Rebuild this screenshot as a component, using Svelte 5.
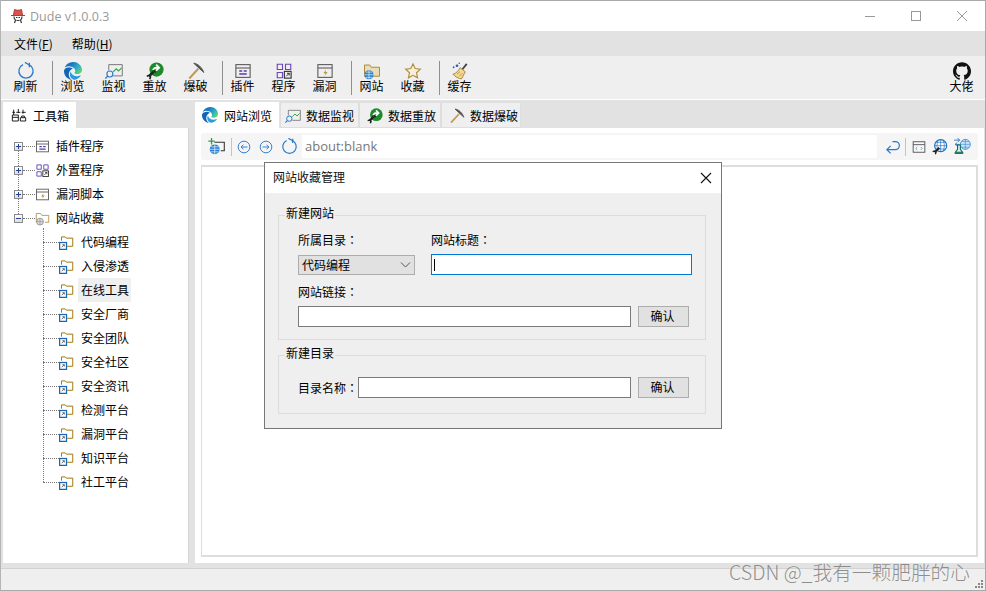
<script>
	const tools1 = [
		{ icon: 'edge', label: '浏览' },
		{ icon: 'monitor', label: '监视' },
		{ icon: 'replay', label: '重放' },
		{ icon: 'pick', label: '爆破' }
	];
	const tools2 = [
		{ icon: 'plugin', label: '插件' },
		{ icon: 'program', label: '程序' },
		{ icon: 'vuln', label: '漏洞' }
	];
	const tools3 = [
		{ icon: 'site', label: '网站' },
		{ icon: 'star', label: '收藏' }
	];
	const roots = [
		{ icon: 'plugin', label: '插件程序' },
		{ icon: 'program', label: '外置程序' },
		{ icon: 'vuln', label: '漏洞脚本' }
	];
	const sites = ['代码编程', '入侵渗透', '在线工具', '安全厂商', '安全团队', '安全社区', '安全资讯', '检测平台', '漏洞平台', '知识平台', '社工平台'];
	const tabs = [
		{ icon: 'monitor', label: '数据监视', w: 79, pad: 4 },
		{ icon: 'replay', label: '数据重放', w: 82, pad: 7 },
		{ icon: 'pick', label: '数据爆破', w: 80, pad: 7 }
	];
</script>

{#snippet icon(name, size = 18)}
	<svg class="icon" width={size} height={size} viewBox="0 0 24 24" fill="none">
		{#if name === 'refresh'}
			<path d="M8 3.500A9.500 9.500 0 1 0 16 3.500" stroke="#2b79c9" stroke-width="1.700" />
			<path d="M16.500 1v6" stroke="#2b79c9" stroke-width="1.700" /><path d="M10.500 .5l5.500 3-1 .5" stroke="#2b79c9" stroke-width="1.700" />
		{:else if name === 'edge'}
			<defs>
				<linearGradient id="edgeTop" x1="0" y1="0" x2="1" y2="0.6">
					<stop offset="0.35" stop-color="#1a73c4" /><stop offset="0.8" stop-color="#35b6c0" /><stop offset="1" stop-color="#5fd06a" />
				</linearGradient>
			</defs>
			<path fill="#2a9bdc" d="M21.86 17.86q.14 0 .25.12.1.13.1.25t-.11.33l-.32.46-.43.53-.44.5q-.21.25-.38.42l-.22.23q-.58.53-1.34 1.04-.76.51-1.6.91-.86.4-1.74.64t-1.67.24q-.9 0-1.69-.28-.8-.28-1.48-.78-.68-.5-1.22-1.17-.53-.66-.92-1.44-.38-.77-.58-1.6-.2-.83-.2-1.67 0-1 .32-1.96.33-.97.87-1.8.14.95.55 1.77.41.82 1.02 1.5.6.68 1.38 1.21.78.54 1.64.9.86.36 1.77.56.92.2 1.8.2 1.12 0 2.18-.24 1.06-.23 2.06-.72l.2-.1.2-.05z" />
			<path fill="#1265b5" d="M6.36 16.59q0 1.1.27 2.15.27 1.06.78 2.03.51.96 1.24 1.77.74.82 1.66 1.4-1.47-.2-2.8-.74-1.33-.55-2.48-1.37-1.15-.83-2.08-1.9-.92-1.07-1.58-2.33T.36 14.94Q0 13.54 0 12.06q0-.81.32-1.49.31-.68.83-1.23.53-.55 1.2-.96.66-.4 1.35-.66.74-.27 1.5-.39.78-.12 1.55-.12.7 0 1.42.1.72.12 1.4.35.68.23 1.32.57.63.35 1.16.83-.35 0-.7.07-.33.07-.65.23v-.02q-.63.28-1.2.74-.57.46-1.05 1.04-.48.58-.87 1.26-.38.67-.65 1.39-.27.71-.42 1.44-.15.72-.15 1.38z" />
			<path fill="url(#edgeTop)" d="M11.96.06q1.7 0 3.33.39 1.63.38 3.07 1.15 1.43.77 2.62 1.93 1.18 1.16 1.98 2.7.49.94.76 1.96.28 1 .28 2.08 0 .89-.23 1.7-.24.8-.69 1.48-.45.68-1.1 1.22-.64.53-1.45.88-.54.24-1.11.36-.58.13-1.16.13-.42 0-.97-.03-.54-.03-1.1-.12-.55-.1-1.05-.28-.5-.19-.84-.5-.12-.09-.23-.24-.1-.16-.1-.33 0-.15.16-.35.16-.2.35-.5.2-.28.36-.68.16-.4.16-.95 0-1.06-.4-1.96-.4-.91-1.06-1.64-.66-.74-1.52-1.28-.86-.55-1.79-.89-.84-.3-1.72-.44-.87-.14-1.76-.14-1.55 0-3.06.45T.94 7.55q.71-1.74 1.81-3.13 1.1-1.38 2.52-2.35Q6.68 1.1 8.37.58q1.7-.52 3.58-.52Z" />
		{:else if name === 'monitor'}
			<path d="M5 11V3.500h18v15H11" stroke="#6d6d6d" stroke-width="1.200" />
			<path d="M11 13l4-4 3 3 4-4" stroke="#3fa648" stroke-width="1.500" />
			<circle cx="6.500" cy="16" r="4" stroke="#2b79c9" stroke-width="1.500" /><path d="M3.500 19l-3 3" stroke="#2b79c9" stroke-width="1.700" />
		{:else if name === 'replay'}
			<circle cx="14" cy="10" r="9.500" fill="#1f8a2d" />
			<path d="M9 10.500c2-3 5-3.500 8-3M13.500 3.500l4 4-4 4" stroke="#fff" stroke-width="2.400" />
			<path d="M10 13l-6 6" stroke="#222" stroke-width="3.400" /><path d="M1 19l3-1 2 2-1 3M10 11l3 3" stroke="#222" stroke-width="2.200" />
		{:else if name === 'pick'}
			<path d="M3 22L15 9" stroke="#c09a50" stroke-width="2.600" />
			<path d="M9 1.500C14 2 20 7 22.500 14L14 6.500Z" fill="#555" stroke="#444" stroke-width="1" />
		{:else if name === 'plugin'}
			<rect x="2.500" y="3.500" width="19" height="17" stroke="#555" stroke-width="1.400" />
			<path d="M2.500 8h19" stroke="#555" stroke-width="1.400" />
			<path d="M7 12h4M13 12h4M7 16h10" stroke="#5a3da8" stroke-width="2" />
		{:else if name === 'program'}
			<path d="M3 3h7v7H3zM14 3h7v7h-7zM3 14h7v7H3z" stroke="#6b46b8" stroke-width="1.500" />
			<rect x="12.500" y="12.500" width="9" height="9" stroke="#333" stroke-width="1.500" />
			<path d="M15 19l4-4M16 15h3v3" stroke="#333" stroke-width="1.300" />
		{:else if name === 'vuln'}
			<rect x="2.500" y="3.500" width="19" height="17" stroke="#555" stroke-width="1.400" />
			<path d="M2.500 8h19" stroke="#555" stroke-width="1.400" />
			<path d="M13.500 10l-3.500 5h3l-2 4 4.500-5.500h-3z" fill="#b8860b" />
		{:else if name === 'site'}
			<path d="M2 19V4h7l2 3h11v12Z" fill="#eadcb4" stroke="#a98a3a" stroke-width="1.300" />
			<circle cx="8" cy="17" r="6" fill="#2a7fd0" />
			<path d="M2 17h12M8 11v12M4 13.500h8M4 20.500h8" stroke="#fff" stroke-width="0.800" />
		{:else if name === 'star'}
			<path d="M12 2.500l2.900 6.300 6.900.8-5.100 4.700 1.400 6.800-6.100-3.400-6.100 3.400 1.400-6.800-5.100-4.700 6.900-.8Z" fill="#f6eed6" stroke="#b08d3c" stroke-width="1.500" />
		{:else if name === 'broom'}
			<path d="M15 10L21 2.500" stroke="#444" stroke-width="2.400" />
			<path d="M12 7.500l7 5.500-5 9.500c-3 0-9-3-11.500-6.500C6 16 10 12 12 7.500Z" fill="#f1d98f" stroke="#a9873a" stroke-width="1.300" />
			<path d="M8 16l4-3M11 19l4-4" stroke="#a9873a" stroke-width="1" />
			<circle cx="8" cy="5" r="1.800" fill="#2b59c3" /><circle cx="3.500" cy="7" r="1.200" fill="#2b59c3" /><circle cx="11" cy="1.800" r="1" fill="#2b59c3" />
		{:else if name === 'github'}
			<path fill="#111" d="M12 .297c-6.630 0-12 5.373-12 12 0 5.303 3.438 9.800 8.205 11.385.6.113.82-.258.82-.577 0-.285-.01-1.040-.015-2.040-3.338.724-4.042-1.610-4.042-1.610C4.422 18.070 3.633 17.700 3.633 17.700c-1.087-.744.084-.729.084-.729 1.205.084 1.838 1.236 1.838 1.236 1.070 1.835 2.809 1.305 3.495.998.108-.776.417-1.305.760-1.605-2.665-.3-5.466-1.332-5.466-5.930 0-1.310.465-2.380 1.235-3.220-.135-.303-.54-1.523.105-3.176 0 0 1.005-.322 3.300 1.230.96-.267 1.980-.399 3-.405 1.020.006 2.040.138 3 .405 2.280-1.552 3.285-1.230 3.285-1.230.645 1.653.24 2.873.12 3.176.765.84 1.230 1.910 1.230 3.220 0 4.610-2.805 5.625-5.475 5.920.42.36.81 1.096.81 2.220 0 1.606-.015 2.896-.015 3.286 0 .315.21.69.825.57C20.565 22.092 24 17.592 24 12.297c0-6.627-5.373-12-12-12" />
		{:else if name === 'toolbox'}
			<path d="M2 12h9v9H2zM2 15.500h9M14 16h8v5h-8zM16 16v-2.500h4V16M2 8h4M8 8h6M16 8h6M4 4v8M11 3v6M18 4v6" stroke="#111" stroke-width="1.400" />
		{:else if name === 'siteGray'}
			<path d="M2 18V4h7l2 3h11v11h-6" fill="#fff" stroke="#a98a3a" stroke-width="1.300" />
			<circle cx="8" cy="17" r="5.500" fill="#ddd" stroke="#777" />
			<path d="M2.500 17h11M8 11.500v11" stroke="#777" stroke-width="0.800" />
		{:else if name === 'fav'}
			<path d="M4 9V3h6l1.500 2H22v13h-9" stroke="#a07a10" stroke-width="1.600" />
			<rect x="1" y="12" width="11" height="11" fill="#fff" stroke="#1769b8" stroke-width="2" />
			<path d="M4.500 19.500l4-4M5.500 15.500h3v3" stroke="#444" stroke-width="1.200" />
		{:else if name === 'back'}
			<circle cx="12" cy="12" r="10" stroke="#2b79c9" stroke-width="1.600" /><path d="M18 12H7M11 8l-4 4 4 4" stroke="#2b79c9" stroke-width="1.600" />
		{:else if name === 'forward'}
			<circle cx="12" cy="12" r="10" stroke="#2b79c9" stroke-width="1.600" /><path d="M6 12h11M13 8l4 4-4 4" stroke="#2b79c9" stroke-width="1.600" />
		{:else if name === 'newsite'}
			<path d="M9 6h14v12h-5" stroke="#333" stroke-width="1.500" />
			<circle cx="9.500" cy="16" r="7" fill="#2a7fd0" />
			<path d="M2.500 16h14M9.500 9v14M4 12.500h11M4 19.500h11" stroke="#fff" stroke-width="0.900" />
			<path d="M5 0v9M0.500 4.500h9" stroke="#2f9e44" stroke-width="1.800" />
		{:else if name === 'enter'}
			<path d="M12 4h4.500a6.500 6.500 0 0 1 0 13H3M9 11l-6 6 6 6" stroke="#2b79c9" stroke-width="2" />
		{:else if name === 'code'}
			<rect x="2" y="3" width="20" height="18" fill="#f8f8f8" stroke="#555" stroke-width="1.600" />
			<path d="M2 8h20" stroke="#555" stroke-width="1.600" />
			<path d="M9 12l-2.500 2.500L9 17M15 12l2.500 2.500L15 17" stroke="#2e9fc0" stroke-width="1.500" />
		{:else if name === 'globeTool'}
			<circle cx="13" cy="10" r="9" fill="#fff" stroke="#1f6fc0" stroke-width="1.800" />
			<path d="M4 10h18M13 1v18M6 5h14M6 15h14M9 2.500c-2 5-2 10 0 15M17 2.500c2 5 2 10 0 15" stroke="#1f6fc0" stroke-width="1" />
			<path d="M11 13l-7 7" stroke="#222" stroke-width="3.200" /><path d="M1 19l3-1 2 2-1 3" stroke="#222" stroke-width="2" />
		{:else if name === 'lab'}
			<circle cx="16" cy="9" r="7" fill="#cfe4f7" stroke="#3b8ed6" stroke-width="1.300" />
			<path d="M9 9h14M16 2v14M11 5h10M11 13h10" stroke="#3b8ed6" stroke-width="0.900" />
			<path d="M0 3h8M5 0l3 3-3 3M8 9H2M4 7L1.500 9 4 11" stroke="#1f6fc0" stroke-width="1.200" />
			<path d="M5 10h4v6l3 4H2l3-4Z" fill="#d9f0e8" stroke="#0f6b5b" stroke-width="1.500" /><path d="M1 21.500h12" stroke="#0f6b5b" stroke-width="2" />
		{/if}
	</svg>
{/snippet}

{#snippet toolButton(item)}
	<button class="tool">
		{@render icon(item.icon, 18)}
		<span>{item.label}</span>
	</button>
{/snippet}

<div class="window">
	<header class="titlebar">
		<svg class="logo" width="16" height="16" viewBox="0 0 16 16" fill="none">
			<path d="M1 7.500h14M3.500 7l1-5.500c2 1 5 1 7 0l1 5.500" fill="#d9534f" stroke="#b53a36" />
			<path d="M4 8.500c0 2 .5 3 1.500 3.500l-1 3M12 8.500c0 2-.5 3-1.500 3.500l1 3M6 9.500h1.500M8.500 9.500H10M6.500 12.500h3" stroke="#333" stroke-width="1.200" />
		</svg>
		<span class="apptitle">Dude v1.0.0.3</span>
		<div class="winctl">
			<svg width="46" height="20" viewBox="0 0 46 20"><path d="M18 10.500h10" stroke="#999" /></svg>
			<svg width="46" height="20" viewBox="0 0 46 20"><rect x="18.500" y="5.500" width="9" height="9" fill="none" stroke="#999" /></svg>
			<svg width="46" height="20" viewBox="0 0 46 20"><path d="M18 5l10 10M28 5L18 15" stroke="#999" /></svg>
		</div>
	</header>

	<nav class="menubar">
		<span>文件(<u>F</u>)</span>
		<span>帮助(<u>H</u>)</span>
	</nav>

	<div class="toolbar">
		{@render toolButton({ icon: 'refresh', label: '刷新' })}
		<i class="sep"></i>
		{#each tools1 as item}{@render toolButton(item)}{/each}
		<i class="sep"></i>
		{#each tools2 as item}{@render toolButton(item)}{/each}
		<i class="sep"></i>
		{#each tools3 as item}{@render toolButton(item)}{/each}
		<i class="sep"></i>
		{@render toolButton({ icon: 'broom', label: '缓存' })}
		<div class="spacer"></div>
		{@render toolButton({ icon: 'github', label: '大佬' })}
	</div>

	<main class="workspace">
		<aside class="side">
			<div class="tabstrip">
				<div class="tab active toolbox">{@render icon('toolbox', 16)}<span>工具箱</span></div>
			</div>
			<div class="tree">
				{#each roots as root}
					<div class="row">
						<span class="exp plus"></span><span class="dots"></span>
						{@render icon(root.icon, 15)}
						<span class="rootlabel">{root.label}</span>
					</div>
				{/each}
				<div class="row">
					<span class="exp minus"></span><span class="dots"></span>
					{@render icon('siteGray', 15)}
					<span class="rootlabel">网站收藏</span>
				</div>
				<div class="children">
					{#each sites as site}
						<div class="row child">
							<span class="dots"></span>
							{@render icon('fav', 15)}
							<span class="childlabel" class:selected={site === '在线工具'}>{site}</span>
						</div>
					{/each}
				</div>
			</div>
		</aside>

		<section class="content">
			<div class="tabstrip">
				<div class="tab active first">{@render icon('edge', 16)}<span>网站浏览</span></div>
				{#each tabs as tab}
					<div class="tab" style="width: {tab.w}px; padding-left: {tab.pad}px">{@render icon(tab.icon, 16)}<span>{tab.label}</span></div>
				{/each}
			</div>
			<div class="pane">
				<div class="browserbar">
					{@render icon('newsite', 17)}
					<i class="barsep"></i>
					<span class="nav">{@render icon('back', 14)}</span>
					<span class="nav">{@render icon('forward', 14)}</span>
					<span class="nav">{@render icon('refresh', 17)}</span>
					<div class="address">about:blank</div>
					<span class="enter">{@render icon('enter', 15)}</span>
					<i class="barsep end"></i>
					<div class="bartools">
						{@render icon('code', 14)}
						{@render icon('globeTool', 16)}
						{@render icon('lab', 17)}
					</div>
				</div>
				<div class="page"></div>
			</div>
		</section>
	</main>

	<footer class="statusbar">
		<svg class="grip" width="10" height="10" viewBox="0 0 10 10" fill="#888">
			<rect x="7" y="1" width="2" height="2" /><rect x="4" y="4" width="2" height="2" /><rect x="7" y="4" width="2" height="2" />
			<rect x="1" y="7" width="2" height="2" /><rect x="4" y="7" width="2" height="2" /><rect x="7" y="7" width="2" height="2" />
		</svg>
	</footer>

	<div class="dialog">
		<div class="dlgtitle">
			<span>网站收藏管理</span>
			<svg width="12" height="12" viewBox="0 0 12 12"><path d="M1 1l10 10M11 1L1 11" stroke="#111" stroke-width="1.100" /></svg>
		</div>
		<div class="dlgbody">
			<fieldset class="group one">
				<legend>新建网站</legend>
				<div class="line top">
					<div class="field dir">
						<label for="dir">所属目录<span class="colon">：</span></label>
						<div class="select" id="dir"><span>代码编程</span>
							<svg width="11" height="6" viewBox="0 0 11 6"><path d="M1 .5l4.500 4.500L10 .5" fill="none" stroke="#555" /></svg>
						</div>
					</div>
					<div class="field">
						<label for="title">网站标题<span class="colon">：</span></label>
						<div class="input focus" id="title"><i class="caret"></i></div>
					</div>
				</div>
				<label class="urllabel" for="url">网站链接<span class="colon">：</span></label>
				<div class="line">
					<div class="input wide" id="url"></div>
					<button class="ok">确认</button>
				</div>
			</fieldset>
			<fieldset class="group two">
				<legend>新建目录</legend>
				<div class="line">
					<label for="dirname" class="dirlabel">目录名称<span class="colon">：</span></label>
					<div class="input name" id="dirname"></div>
					<button class="ok">确认</button>
				</div>
			</fieldset>
		</div>
	</div>

	<div class="watermark">CSDN @_我有一颗肥胖的心</div>
</div>

<style>
	:global(body) {
		margin: 0;
		background: #fff;
	}

	.window {
		position: relative;
		box-sizing: border-box;
		width: 986px;
		height: 591px;
		display: flex;
		flex-direction: column;
		overflow: hidden;
		border: 1px solid #a9a9a9;
		border-left-color: #b5b5b5;
		color: #000;
		font: 12px 'Noto Sans CJK SC', 'Liberation Sans', sans-serif;
	}

	.icon {
		flex: none;
		display: block;
	}

	.titlebar {
		height: 30px;
		display: flex;
		align-items: center;
		padding-left: 9px;
		background: #fff;
	}

	.logo {
		margin-right: 4px;
	}

	.apptitle {
		color: #999;
		font: 12.500px 'Open Sans', sans-serif;
	}

	.winctl {
		margin-left: auto;
		display: flex;
	}

	.menubar {
		height: 25px;
		display: flex;
		align-items: center;
		gap: 19px;
		padding-left: 13px;
		background: #e2e2e2;
	}

	.toolbar {
		height: 43px;
		display: flex;
		align-items: center;
		padding-left: 4px;
		padding-right: 3px;
		background: #efefef;
		border-bottom: 1px solid #fff;
	}

	.tool {
		box-sizing: border-box;
		width: 41px;
		height: 40px;
		padding: 4px 0 0;
		border: 0;
		background: none;
		display: flex;
		flex-direction: column;
		align-items: center;
		font: inherit;
		color: inherit;
		line-height: 14px;
	}

	.tool span {
		margin-top: -1px;
	}

	.sep {
		width: 1px;
		height: 34px;
		margin: 0 -1px 0 6px;
		background: #8f8f8f;
	}

	.spacer {
		flex: 1;
	}

	.workspace {
		flex: 1;
		min-height: 0;
		display: flex;
		gap: 6px;
		padding: 2px 1px 5px 2px;
		background: #e2e2e2;
		border-bottom: 1px solid #d2d2d2;
	}

	.side {
		width: 186px;
		display: flex;
		flex-direction: column;
	}

	.content {
		flex: 1;
		min-width: 0;
		display: flex;
		flex-direction: column;
	}

	.tabstrip {
		height: 26px;
		flex: none;
		display: flex;
	}

	.tab {
		box-sizing: border-box;
		display: flex;
		align-items: center;
		gap: 5px;
		padding-left: 4px;
		background: #efefef;
		border: 1px solid #e2e2e2;
		border-bottom: 0;
		outline: 1px solid #dedede;
		outline-offset: -1px;
	}

	.tab.active {
		background: #fff;
		outline: 0;
		border: 0;
	}

	.toolbox {
		width: 73px;
		gap: 6px;
		padding-left: 8px;
	}

	.first {
		width: 84px;
		padding-left: 7px;
		margin-right: 1px;
		gap: 6px;
	}

	.tree {
		position: relative;
		flex: 1;
		padding-top: 6px;
		background: #fff;
		border-right: 1px solid #d6d6d6;
	}

	.tree::before {
		content: '';
		position: absolute;
		left: 15px;
		top: 18px;
		height: 72px;
		border-left: 1px dotted #777;
	}

	.row {
		height: 24px;
		display: flex;
		align-items: center;
		padding-left: 11px;
	}

	.exp {
		position: relative;
		z-index: 1;
		box-sizing: border-box;
		width: 9px;
		height: 9px;
		border: 1px solid #8a8a8a;
		background: linear-gradient(#fff, #ddd);
	}

	.exp::before,
	.plus::after {
		content: '';
		position: absolute;
		background: #2a3f8f;
	}

	.exp::before {
		left: 1px;
		right: 1px;
		top: 3px;
		height: 1px;
	}

	.plus::after {
		top: 1px;
		bottom: 1px;
		left: 3px;
		width: 1px;
	}

	.dots {
		width: 12px;
		border-top: 1px dotted #777;
	}

	.rootlabel {
		margin-left: 6px;
		padding-bottom: 2px;
	}

	.children {
		position: relative;
	}

	.children::before {
		content: '';
		position: absolute;
		left: 40px;
		top: -2px;
		height: 254px;
		border-left: 1px dotted #777;
	}

	.child {
		padding-left: 40px;
	}

	.child .dots {
		width: 16px;
	}

	.childlabel {
		margin-left: 4px;
		padding: 0 2px 0 3px;
		line-height: 24px;
	}

	.selected {
		background: #efefef;
	}

	.pane {
		flex: 1;
		min-height: 0;
		display: flex;
		flex-direction: column;
		padding: 5px 6px 6px 6px;
		background: #fff;
	}

	.browserbar {
		height: 27px;
		flex: none;
		display: flex;
		align-items: center;
		padding: 0 7px 0 7px;
		background: #f5f5f5;
		border-radius: 3px;
	}

	.barsep {
		width: 1px;
		height: 18px;
		margin: 0 5px 0 6px;
		background: #c4c4c4;
	}

	.barsep.end {
		margin: 0 6px 0 5px;
	}

	.nav {
		margin-right: 8px;
	}

	.enter {
		margin-left: 8px;
	}

	.bartools {
		display: flex;
		align-items: center;
		gap: 6px;
	}

	.address {
		flex: 1;
		height: 23px;
		margin-left: -4px;
		padding-left: 3px;
		background: #fff;
		color: #777;
		font: 13px/23px 'Open Sans', sans-serif;
	}

	.page {
		flex: 1;
		margin-top: 5px;
		border: 1px solid #ddd;
		border-width: 2px 2px 2px 1px;
		background: #fff;
	}

	.statusbar {
		height: 21px;
		position: relative;
		background: #efefef;
	}

	.grip {
		position: absolute;
		right: 1px;
		bottom: 1px;
	}

	.dialog {
		position: absolute;
		left: 263px;
		top: 161px;
		box-sizing: border-box;
		width: 458px;
		height: 267px;
		display: flex;
		flex-direction: column;
		border: 1px solid #777;
		background: #efefef;
	}

	.dlgtitle {
		height: 30px;
		box-sizing: border-box;
		flex: none;
		display: flex;
		align-items: center;
		justify-content: space-between;
		padding: 0 9px 0 8px;
		background: #fff;
		color: #111;
	}

	.dlgtitle span {
		padding-bottom: 3px;
	}

	.dlgbody {
		display: flex;
		flex-direction: column;
		gap: 4px;
		padding: 11px 15px 0 13px;
	}

	.group {
		margin: 0;
		padding: 0 0 0 19px;
		border: 1px solid #dcdcdc;
	}

	legend {
		margin-left: -13px;
		padding: 0 1px 5px;
		line-height: 17px;
	}

	.one {
		height: 134px;
	}

	.two {
		height: 68px;
	}

	.line {
		display: flex;
		align-items: center;
		gap: 7px;
	}

	.top {
		gap: 16px;
		margin-top: 5px;
	}

	.field {
		display: flex;
		flex-direction: column;
		gap: 6px;
	}

	.field label,
	.urllabel {
		line-height: 17px;
	}

	.urllabel {
		display: block;
		margin: 8px 0 6px;
	}

	.colon {
		font-family: 'Noto Sans CJK TC', sans-serif;
	}

	.dir {
		width: 117px;
	}

	.select {
		box-sizing: border-box;
		height: 20px;
		margin-top: 1px;
		display: flex;
		align-items: center;
		justify-content: space-between;
		padding: 0 3px;
		background: #e1e1e1;
		border: 1px solid #adadad;
	}

	.select span {
		padding-bottom: 2px;
	}

	.input {
		box-sizing: border-box;
		height: 21px;
		background: #fff;
		border: 1px solid #7a7a7a;
	}

	.input.focus {
		width: 261px;
		border-color: #0078d7;
		display: flex;
		align-items: center;
		padding-left: 2px;
	}

	.caret {
		width: 1px;
		height: 12px;
		background: #000;
	}

	.wide {
		width: 333px;
	}

	.name {
		width: 273px;
	}

	.dirlabel {
		flex: none;
		width: 60px;
		margin-right: -7px;
		white-space: nowrap;
	}

	.two .line {
		margin-top: 11px;
	}

	.ok {
		box-sizing: border-box;
		width: 51px;
		height: 21px;
		padding: 0 2px 2px 0;
		background: #e1e1e1;
		border: 1px solid #adadad;
		font: inherit;
		line-height: 17px;
		color: #000;
	}

	.watermark {
		position: absolute;
		right: 15px;
		top: 558px;
		color: rgba(125, 125, 125, 0.85);
		font: 300 19.700px/26px 'Noto Sans CJK SC', 'Liberation Sans', sans-serif;
		white-space: nowrap;
		pointer-events: none;
	}
</style>
